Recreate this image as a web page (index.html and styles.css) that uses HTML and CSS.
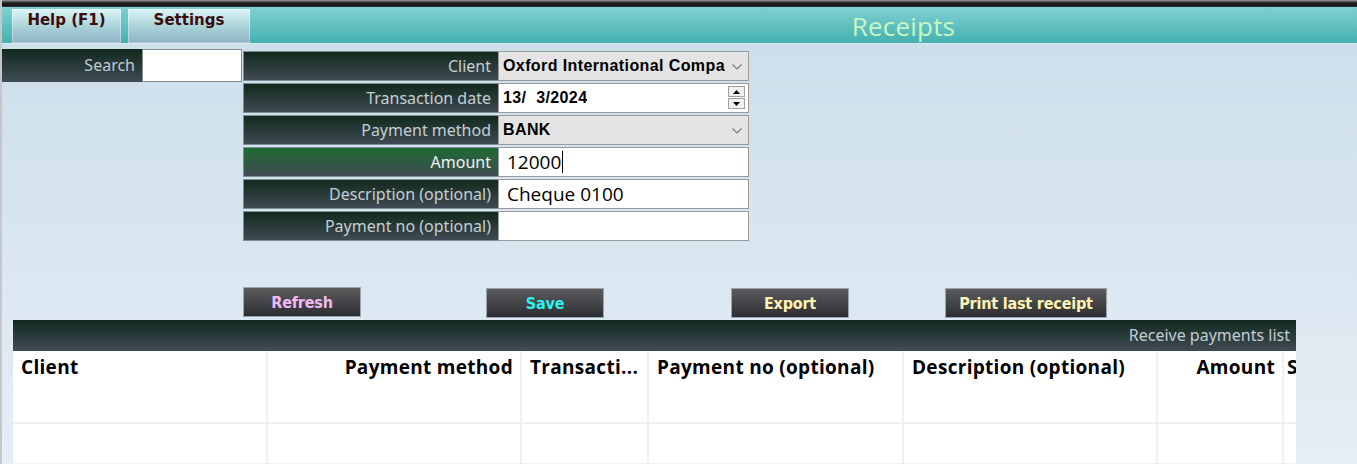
FILE: index.html
```html
<!DOCTYPE html>
<html>
<head>
<meta charset="utf-8">
<link rel="stylesheet" href="styles.css">
</head>
<body>
<div class="window">
  <div class="topbar"></div>
  <header class="header">
    <button class="hbtn hbtn-help">Help (F1)</button>
    <button class="hbtn hbtn-settings">Settings</button>
    <div class="title">Receipts</div>
  </header>
  <main class="content">
    <div class="top-area">
      <div class="search">
        <div class="search-label">Search</div>
        <div class="search-input"></div>
      </div>
      <div class="form">
        <div class="label">Client</div>
        <div class="field select"><span class="val-bold">Oxford International Compa</span><svg class="chev" width="12" height="8" viewBox="0 0 12 8"><polyline points="1.5,1.5 6,6 10.5,1.5" fill="none" stroke="#7a7a7a" stroke-width="1.2"/></svg></div>

        <div class="label">Transaction date</div>
        <div class="field white"><span class="val-bold">13/&nbsp; 3/2024</span>
          <div class="spin">
            <div class="spin-btn"><svg width="7" height="4" viewBox="0 0 7 4"><polygon points="0,4 7,4 3.5,0" fill="#000"/></svg></div>
            <div class="spin-btn"><svg width="7" height="4" viewBox="0 0 7 4"><polygon points="0,0 7,0 3.5,4" fill="#000"/></svg></div>
          </div>
        </div>

        <div class="label">Payment method</div>
        <div class="field select"><span class="val-bold">BANK</span><svg class="chev" width="12" height="8" viewBox="0 0 12 8"><polyline points="1.5,1.5 6,6 10.5,1.5" fill="none" stroke="#7a7a7a" stroke-width="1.2"/></svg></div>

        <div class="label label-active">Amount</div>
        <div class="field white"><span class="val-text">12000</span><span class="caret"></span></div>

        <div class="label">Description (optional)</div>
        <div class="field white"><span class="val-text">Cheque 0100</span></div>

        <div class="label">Payment no (optional)</div>
        <div class="field white"></div>
      </div>
    </div>

    <div class="actions">
      <button class="abtn abtn-refresh">Refresh</button>
      <button class="abtn abtn-save">Save</button>
      <button class="abtn abtn-export">Export</button>
      <button class="abtn abtn-print">Print last receipt</button>
    </div>

    <section class="list">
      <div class="list-bar">Receive payments list</div>
      <div class="table">
        <div class="row head">
          <div class="cell c1">Client</div>
          <div class="cell c2 right">Payment method</div>
          <div class="cell c3">Transacti...</div>
          <div class="cell c4">Payment no (optional)</div>
          <div class="cell c5">Description (optional)</div>
          <div class="cell c6 right">Amount</div>
          <div class="cell c7">S</div>
        </div>
        <div class="row body">
          <div class="cell c1"></div><div class="cell c2"></div><div class="cell c3"></div><div class="cell c4"></div><div class="cell c5"></div><div class="cell c6"></div><div class="cell c7"></div>
        </div>
        <div class="row body">
          <div class="cell c1"></div><div class="cell c2"></div><div class="cell c3"></div><div class="cell c4"></div><div class="cell c5"></div><div class="cell c6"></div><div class="cell c7"></div>
        </div>
      </div>
    </section>
  </main>
  <div class="bottom-border"></div>
</div>
</body>
</html>
```

FILE: styles.css
```css
* { box-sizing: border-box; }
html, body { margin: 0; padding: 0; }
body {
  width: 1357px;
  height: 464px;
  overflow: hidden;
  font-family: "Noto Sans", "DejaVu Sans", sans-serif;
  background: #d8d8d8;
}
.window {
  width: 1357px;
  height: 464px;
  display: flex;
  flex-direction: column;
  border-left: 2px solid #c4c8cc;
  overflow: hidden;
}
.topbar {
  height: 7px;
  background: linear-gradient(#a8a8a8 0, #6a6a6a 1px, #222 3px, #111 5px, #3a3a3a 7px);
  flex: none;
}
.header {
  height: 37px;
  flex: none;
  display: flex;
  align-items: flex-start;
  background: linear-gradient(#7fd1d0, #44b1b0);
  border-bottom: 1px solid #d8eaf0;
  padding-top: 2px;
}
.hbtn {
  height: 34px;
  border: none;
  background: linear-gradient(#dcf6f6, #a8d0d8 55%, #8fb2c4);
  color: #3a0c0c;
  font-family: "DejaVu Sans", sans-serif;
  font-weight: bold;
  font-size: 15px;
  padding: 2px 0 0;
  display: flex;
  justify-content: center;
  align-items: flex-start;
  box-shadow: inset 0 0 0 1px rgba(255,255,255,0.35);
}
.hbtn-help { width: 109px; margin-left: 10px; }
.hbtn-settings { width: 122px; margin-left: 7px; }
.title {
  flex: 1;
  text-align: center;
  padding-left: 200px;
  color: #c8f6c4;
  font-family: "Open Sans", "Noto Sans", sans-serif;
  font-size: 26px;
  line-height: 34px;
  letter-spacing: 0.2px;
}
.content {
  flex: 1;
  position: relative;
  background: linear-gradient(#cddfeb, #e6eef6);
  padding-top: 5px;
  display: flex;
  flex-direction: column;
}
.top-area {
  display: flex;
  align-items: flex-start;
}
.search {
  display: flex;
  height: 33px;
}
.search-label {
  width: 140px;
  background: linear-gradient(#11291e, #404c55);
  color: #c4ccd0;
  font-size: 16px;
  text-align: right;
  padding-right: 7px;
  line-height: 32px;
}
.search-input {
  width: 100px;
  background: #fff;
  border: 1px solid #8a8a8a;
}
.form {
  margin-left: 1px;
  margin-top: 2px;
  display: grid;
  grid-template-columns: 255px 251px;
  grid-auto-rows: 30px;
  row-gap: 2px;
  width: 506px;
}
.label {
  background: linear-gradient(#12291d, #3f4b54);
  border: 1px solid #7e8c94;
  border-right: none;
  color: #c6ced2;
  font-size: 16px;
  text-align: right;
  padding-right: 7px;
  line-height: 28px;
  white-space: nowrap;
}
.label-active {
  background: linear-gradient(#1e6a32, #3f4b54);
  color: #eef2f0;
}
.field {
  border: 1px solid #9a9a9a;
  display: flex;
  align-items: center;
  padding-left: 4px;
  position: relative;
}
.field.white { background: #fff; }
.field.select { background: #e4e4e4; }
.val-bold {
  font-family: "Liberation Sans", Arial, sans-serif;
  font-weight: bold;
  font-size: 16px;
  letter-spacing: 0.4px;
  color: #000;
  white-space: nowrap;
  overflow: hidden;
  max-width: 222px;
}
.val-text {
  font-family: "Open Sans", "Noto Sans", sans-serif;
  font-size: 19px;
  color: #000;
  margin-left: 4px;
}
.caret {
  width: 1px;
  height: 22px;
  background: #000;
  margin-left: 1px;
}
.chev {
  position: absolute;
  right: 5px;
  top: 11px;
}
.spin {
  position: absolute;
  right: 3px;
  top: 2px;
  display: flex;
  flex-direction: column;
  gap: 1px;
}
.spin-btn {
  width: 17px;
  height: 11px;
  background: #f0f0f0;
  border: 1px solid #a0a0a0;
  display: flex;
  align-items: center;
  justify-content: center;
}
.actions {
  display: flex;
  margin-top: 46px;
  height: 31px;
  align-items: flex-start;
}
.abtn {
  height: 30px;
  border: 1px solid #9aa4ac;
  background: linear-gradient(#5c5c5e, #2b2e32);
  font-family: "DejaVu Sans Condensed", "DejaVu Sans", sans-serif;
  font-stretch: condensed;
  font-weight: bold;
  font-size: 16px;
  padding: 0;
  letter-spacing: -0.2px;
}
.abtn-refresh { width: 118px; margin-left: 241px; color: #f2b8f2; }
.abtn-save { width: 118px; margin-left: 125px; margin-top: 1px; color: #2ef2f0; }
.abtn-export { width: 118px; margin-left: 127px; margin-top: 1px; color: #fff2b4; }
.abtn-print { width: 162px; margin-left: 96px; margin-top: 1px; color: #fff2b4; }
.list {
  margin-left: 11px;
  margin-top: 2px;
  width: 1283px;
  flex: 1;
  display: flex;
  flex-direction: column;
}
.list-bar {
  height: 31px;
  background: linear-gradient(#11291e, #404c55);
  color: #c4ccd0;
  font-size: 16px;
  text-align: right;
  padding-right: 6px;
  line-height: 31px;
  flex: none;
}
.table {
  flex: 1;
  background: #fff;
  display: flex;
  flex-direction: column;
  overflow: hidden;
}
.row {
  display: flex;
  flex: none;
}
.row.head { height: 32px; }
.row.body { height: 41px; border-bottom: 2px solid #f0f0f0; }
.cell {
  border-right: 2px solid #f0f0f0;
  font-family: "Open Sans", "Noto Sans", sans-serif;
  font-weight: bold;
  font-size: 19px;
  color: #000;
  line-height: 33px;
  padding: 0 7px 0 8px;
  white-space: nowrap;
  overflow: hidden;
  letter-spacing: 0.3px;
}
.cell.right { text-align: right; }
.c1 { width: 255px; }
.c2 { width: 254px; }
.c3 { width: 127px; }
.c4 { width: 255px; }
.c5 { width: 254px; }
.c6 { width: 126px; }
.c7 { width: 12px; border-right: none; padding: 0 0 0 3px; }
.bottom-border {
  height: 3px;
  flex: none;
  background: #dcdcdc;
}
```
